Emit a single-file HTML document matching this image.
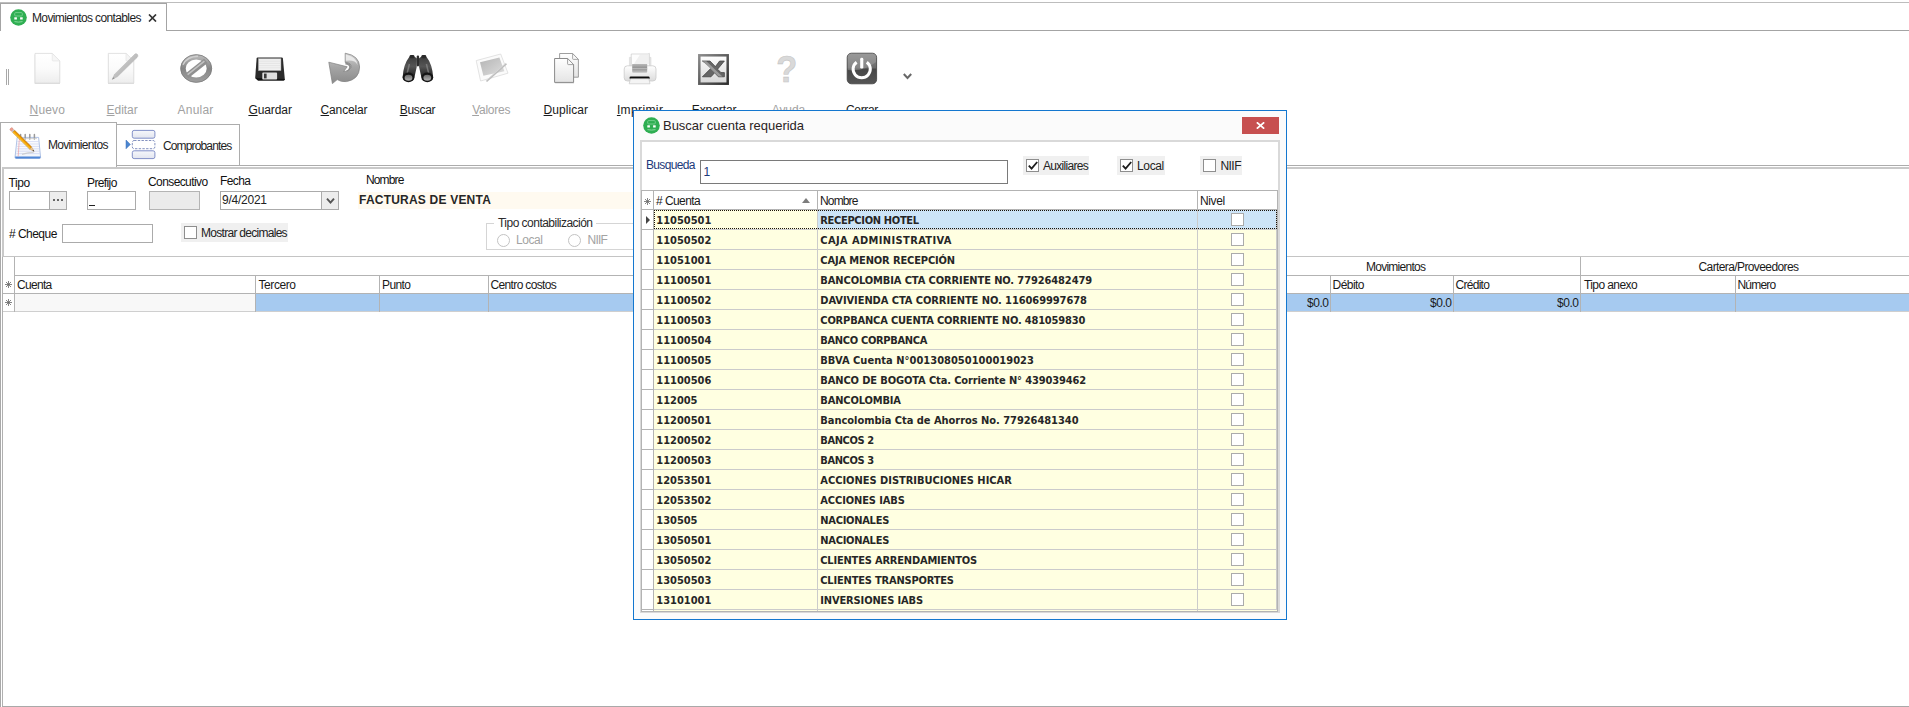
<!DOCTYPE html>
<html lang="es">
<head>
<meta charset="utf-8">
<title>Movimientos contables</title>
<style>
*{box-sizing:border-box;margin:0;padding:0}
html,body{width:1909px;height:707px;overflow:hidden;background:#fff}
body{position:relative;font-family:"Liberation Sans",sans-serif;font-size:12px;color:#000}
.abs{position:absolute}
.t{position:absolute;white-space:nowrap;line-height:14px}
#topline{left:0;top:2px;width:1909px;height:1px;background:#bdbdbd}
#leftline0{left:0;top:122px;width:1px;height:585px;background:#a9a9a9}
#leftline{left:2px;top:167px;width:2px;height:90px;background:#c9c9c9}
#leftline2{left:2px;top:256px;width:1px;height:451px;background:#b0b0b0}
#botline{left:2px;top:706px;width:1907px;height:1px;background:#a9a9a9}
#doctab{left:0;top:3px;width:167px;height:28px;border:1px solid #a4a4a4;border-bottom:none;background:#fff}
#docline{left:166px;top:30px;width:1743px;height:1px;background:#a4a4a4}
.tb{position:absolute;top:95px;width:90px;text-align:center;font-size:12px;line-height:30px;height:30px;white-space:nowrap;color:#1a1a1a}
.tb.dis{color:#a2a2a2}
.tb u{text-decoration:underline;text-underline-offset:0.5px;text-decoration-thickness:1px}
.ico{position:absolute;top:53px;width:32px;height:32px}
.itab{position:absolute;border:1px solid #acacac;border-bottom:none;background:#fff}
.inp{position:absolute;border:1px solid #ababab;background:#fff;height:19px}
.lbl{position:absolute;white-space:nowrap;font-size:12px;line-height:14px;color:#111}
.cbwrap{position:absolute;background:#f0f0f0}
.cb{display:inline-block;width:13px;height:13px;border:1px solid #8e8e8e;background:#fff;position:absolute}
.gl{position:absolute;background:#b3b3b3}
.gh{position:absolute;white-space:nowrap;font-size:12px;line-height:18px;height:18px;color:#1a1a1a}
#dlg{left:633px;top:110px;width:654px;height:510px;border:1px solid #1477cf;background:#fbfbfb}
#dlgpanel{left:6px;top:29px;width:640px;height:473px;border:2px solid #d9d9d9;background:#fff}
.drow{position:absolute;left:8px;width:636px;height:20px;font-family:"DejaVu Sans Condensed","DejaVu Sans","Liberation Sans",sans-serif;font-weight:bold;font-size:11px;line-height:22px;color:#262626}
.drow>div{position:absolute;top:0;height:20px;border-right:1px solid #cbcbcb;border-bottom:1px solid #cbcbcb;background:#ffffe1;white-space:nowrap;overflow:hidden}
.drow .c0{left:0;width:12px;background:#fff;border-color:#b3b3b3}
.drow .c1{left:12px;width:164px;padding-left:2.3px}
.drow .c2{left:176px;width:380px;padding-left:2.3px}
.drow .c3{left:556px;width:79px}
.drow .c3 .cb{left:33px;top:3px;border-color:#ababab}
.drow.sel .c1{background:#ffffe1}
.drow.sel .c2,.drow.sel .c3{background:#cde4f7}
.arr{position:absolute;left:4px;top:6px;width:0;height:0;border-left:4px solid #444;border-top:4px solid transparent;border-bottom:4px solid transparent}

</style>
</head>
<body>
<div class="abs" id="topline"></div>
<div class="abs" id="leftline0"></div>
<div class="abs" id="leftline"></div>
<div class="abs" id="leftline2"></div>
<div class="abs" id="botline"></div>
<div class="abs" id="docline"></div>
<div class="abs" id="doctab"></div>
<svg class="abs" style="left:10px;top:9px" width="17" height="17" viewBox="0 0 17 17"><circle cx="8.5" cy="8.5" r="8.3" fill="#2fae52"/><rect x="4.7" y="3.6" width="7.6" height="3.4" rx="1" fill="none" stroke="#7fd596" stroke-width="0.8"/><rect x="4.3" y="8.3" width="2.6" height="2.2" fill="#fff"/><rect x="10.1" y="8.3" width="2.6" height="2.2" fill="#fff"/><path d="M4.5 12.6 Q8.5 13.6 12.5 12.6" fill="none" stroke="#8fdca3" stroke-width="0.9"/></svg>
<span class="t" style="letter-spacing:-0.632px;left:32px;top:11px;font-size:12px;color:#1e1e1e">Movimientos contables</span>
<svg class="abs" style="left:148px;top:14px" width="9" height="8" viewBox="0 0 9 8"><path d="M1 0.5 L8 7.5 M8 0.5 L1 7.5" stroke="#333" stroke-width="1.7" fill="none"/></svg>

<!-- toolbar -->
<div class="abs" style="left:6px;top:69px;width:1px;height:16px;background:#a8a8a8"></div>
<div class="abs" style="left:8px;top:69px;width:1px;height:16px;background:#a8a8a8"></div>
<svg class="abs" style="left:0;top:48px" width="930" height="44" viewBox="0 48 930 44">
<defs>
<linearGradient id="gpage" x1="0" y1="0" x2="0" y2="1"><stop offset="0" stop-color="#ffffff"/><stop offset="0.5" stop-color="#fbfbfb"/><stop offset="1" stop-color="#ededed"/></linearGradient>
<linearGradient id="gpage2" x1="0" y1="0" x2="0" y2="1"><stop offset="0" stop-color="#ffffff"/><stop offset="1" stop-color="#e4e4e4"/></linearGradient>
<linearGradient id="gring" x1="0" y1="0" x2="0" y2="1"><stop offset="0" stop-color="#b4b4b4"/><stop offset="0.5" stop-color="#868686"/><stop offset="1" stop-color="#9c9c9c"/></linearGradient>
<linearGradient id="garrow" x1="0" y1="0" x2="0" y2="1"><stop offset="0" stop-color="#d2d2d2"/><stop offset="0.45" stop-color="#a6a6a6"/><stop offset="1" stop-color="#8a8a8a"/></linearGradient>
<linearGradient id="gbino" x1="0" y1="0" x2="0" y2="1"><stop offset="0" stop-color="#3a3a3a"/><stop offset="0.5" stop-color="#555"/><stop offset="1" stop-color="#1c1c1c"/></linearGradient>
<linearGradient id="glens" x1="0" y1="0" x2="0" y2="1"><stop offset="0" stop-color="#6a6a6a"/><stop offset="1" stop-color="#b0b0b0"/></linearGradient>
<linearGradient id="gphoto" x1="0" y1="0" x2="1" y2="1"><stop offset="0" stop-color="#b4b4b4"/><stop offset="1" stop-color="#dedede"/></linearGradient>
<linearGradient id="gtray" x1="0" y1="0" x2="0" y2="1"><stop offset="0" stop-color="#b8b8b8"/><stop offset="0.5" stop-color="#8f8f8f"/><stop offset="1" stop-color="#c4c4c4"/></linearGradient>
<linearGradient id="gprn" x1="0" y1="0" x2="0" y2="1"><stop offset="0" stop-color="#ffffff"/><stop offset="1" stop-color="#dcdcdc"/></linearGradient>
<linearGradient id="gxl" x1="0" y1="0" x2="1" y2="1"><stop offset="0" stop-color="#8c8c8c"/><stop offset="0.5" stop-color="#5c5c5c"/><stop offset="1" stop-color="#2e2e2e"/></linearGradient>
<linearGradient id="gxlin" x1="0" y1="0" x2="0" y2="1"><stop offset="0" stop-color="#ffffff"/><stop offset="1" stop-color="#d6d6d6"/></linearGradient>
<linearGradient id="gpow" x1="0" y1="0" x2="0" y2="1"><stop offset="0" stop-color="#8e8e8e"/><stop offset="0.48" stop-color="#6a6a6a"/><stop offset="0.52" stop-color="#474747"/><stop offset="1" stop-color="#555"/></linearGradient>
<linearGradient id="gpen" x1="0" y1="0" x2="1" y2="1"><stop offset="0" stop-color="#e2e2e2"/><stop offset="1" stop-color="#9c9c9c"/></linearGradient>
<filter id="sh" x="-10%" y="-10%" width="120%" height="125%"><feGaussianBlur stdDeviation="0.5"/></filter>
</defs>
<!-- Nuevo -->
<path d="M34.6 53.6 H52.3 L60 61.2 V83.2 H34.6 Z" fill="#c4c4c4" opacity="0.55" filter="url(#sh)" transform="translate(0,0.9)"/>
<path d="M35 53.4 H52.2 L59.8 61 V83 H35 Z" fill="url(#gpage)" stroke="#dadada" stroke-width="0.8"/>
<path d="M52.2 53.4 V60.2 Q52.2 61 53 61 H59.8 Z" fill="#f6f6f6" stroke="#e2e2e2" stroke-width="0.6"/>
<!-- Editar -->
<path d="M108 53.6 H126 L134 61.2 V83.2 H108 Z" fill="#c4c4c4" opacity="0.55" filter="url(#sh)" transform="translate(0,0.9)"/>
<path d="M108.3 53.4 H126 L133.8 61 V83 H108.3 Z" fill="url(#gpage)" stroke="#dadada" stroke-width="0.8"/>
<path d="M126 53.4 V60.2 Q126 61 126.8 61 H133.8 Z" fill="#f4f4f4" stroke="#e2e2e2" stroke-width="0.6"/>
<path d="M135.2 53.8 Q137 53.2 137.8 55 Q138.2 56.4 137 57.6 L117.6 76.6 L112.2 79.4 L114.6 74.2 Z" fill="url(#gpen)" stroke="#b4b4b4" stroke-width="0.5"/>
<path d="M112.2 79.4 L113.2 77.2 L114.6 78.3 Z" fill="#8a8a8a"/>
<!-- Anular -->
<ellipse cx="196.2" cy="68.5" rx="13.1" ry="11.5" fill="none" stroke="url(#gring)" stroke-width="5.2"/>
<path d="M186.6 76.2 L205.8 60.8" stroke="#909090" stroke-width="5.4" fill="none"/>
<path d="M187.6 74.6 L204.4 61.2" stroke="#c2c2c2" stroke-width="1.5" fill="none"/>
<ellipse cx="196.2" cy="68.5" rx="15.5" ry="13.9" fill="none" stroke="#7c7c7c" stroke-width="0.8"/>
<path d="M183 64.8 Q187 56.4 198 56.2" stroke="#d0d0d0" stroke-width="1.4" fill="none"/>
<!-- Guardar -->
<path d="M257.6 57.6 H281.8 Q282.8 57.6 282.9 58.6 L284.8 79 Q284.9 80.4 283.6 80.4 H258 L255.2 78 L256.6 58.6 Q256.7 57.6 257.6 57.6 Z" fill="#2b2b2b"/>
<path d="M255.2 78 L258 80.4 H283.6 Q284.9 80.4 284.8 79 Z" fill="#111"/>
<rect x="258.6" y="58.8" width="22.3" height="11.6" fill="#f1f1f1" stroke="#cfcfcf" stroke-width="0.5"/>
<path d="M259 61.2H280.6M259 63.4H280.6M259 65.6H280.6M259 67.8H280.6" stroke="#dcdcdc" stroke-width="0.6"/>
<rect x="262.3" y="72.6" width="14.8" height="7" rx="0.8" fill="#dedede"/>
<rect x="264" y="73.6" width="2.6" height="4.8" fill="#3a3a3a"/>
<!-- Cancelar -->
<path d="M345.2 53.2 Q359.4 55.6 359.6 67 Q359.4 79.4 346.4 81.6 Q341 82.2 337.2 79.6 L332.4 83.6 L328.8 62.2 L347.2 66.8 L343.6 71.6 Q349.4 71.6 351.2 67.6 Q352 62.8 345.2 62.4 Z" fill="url(#garrow)" stroke="#7e7e7e" stroke-width="0.7"/>
<path d="M345.8 54.4 Q357.4 57 357.6 65 Q355 59.4 345.8 60.8 Z" fill="#ececec" opacity="0.9"/>
<path d="M345.4 62.6 Q351.6 63 351 67.6 Q349.8 71 345.2 71.4 Q349 69.6 349.200 67 Q349 64.400 345.400 64.400 Z" fill="#7c7c7c" opacity="0.85"/>
<!-- Buscar (binoculars) -->
<path d="M409.4 56.8 Q410.8 54.8 413.4 55.8 L416.9 58.4 L416.7 67 L414.4 77.4 H402.6 Q403.4 64.4 409.4 56.8 Z" fill="url(#gbino)"/>
<path d="M426.400 56.8 Q425 54.8 422.400 55.8 L418.900 58.4 L419.100 67 L421.400 77.4 H433.200 Q432.400 64.4 426.400 56.8 Z" fill="url(#gbino)"/>
<rect x="416.700" y="55.6" width="2.400" height="10.8" rx="1.100" fill="#2e2e2e"/>
<rect x="409.600" y="54.9" width="4.800" height="3.400" rx="1.400" fill="#2a2a2a"/><rect x="421.400" y="54.9" width="4.800" height="3.400" rx="1.400" fill="#2a2a2a"/>
<path d="M409.400 64 L407.200 73 M426.400 64 L428.600 73" stroke="#8a8a8a" stroke-width="1.500" opacity="0.7"/>
<ellipse cx="408.500" cy="77.4" rx="5.900" ry="4.900" fill="#141414"/>
<ellipse cx="427.300" cy="77.4" rx="5.900" ry="4.900" fill="#141414"/>
<ellipse cx="408.500" cy="77.700" rx="3.900" ry="3" fill="url(#glens)"/>
<ellipse cx="427.300" cy="77.700" rx="3.900" ry="3" fill="url(#glens)"/>
<!-- Valores -->
<path d="M476.2 60.6 L500.7 54 L508 73.2 L480.6 81 Z" fill="#fbfbfb" stroke="#dcdcdc" stroke-width="0.8"/>
<path d="M480 62.2 L499.4 57.4 L504.4 71.2 L483.4 75.7 Z" fill="url(#gphoto)"/>
<path d="M506.4 63.6 L486.4 81.4" stroke="#bdbdbd" stroke-width="1.9" fill="none"/>
<path d="M506 63 L486 80.8" stroke="#e0e0e0" stroke-width="0.7" fill="none"/>
<!-- Duplicar -->
<path d="M559.6 53.5 H572.6 L578.4 59.4 V77.2 H559.6 Z" fill="url(#gpage2)" stroke="#949494" stroke-width="0.9"/>
<path d="M572.6 53.5 V58.6 Q572.6 59.4 573.4 59.4 H578.4 Z" fill="#f8f8f8" stroke="#949494" stroke-width="0.8"/>
<path d="M554.8 59.2 H567.4 L573.6 65.4 V82.8 H554.8 Z" fill="#9a9a9a" opacity="0.4" filter="url(#sh)" transform="translate(0.4,0.7)"/>
<path d="M554.6 58.5 H567.6 L573.6 64.6 V82.4 H554.6 Z" fill="url(#gpage2)" stroke="#8a8a8a" stroke-width="1"/>
<path d="M567.6 58.5 V63.8 Q567.6 64.6 568.4 64.6 H573.6 Z" fill="#fafafa" stroke="#8a8a8a" stroke-width="0.8"/>
<!-- Imprimir -->
<path d="M631.2 54 H648 L649.4 53.4 V66.6 H631.2 Z" fill="#fdfdfd" stroke="#cdcdcd" stroke-width="0.7"/>
<path d="M640 54.4 H649 V64 H634 Z" fill="#e9e9e9" opacity="0.7"/>
<path d="M629.4 57.4 H631 V66 H629.4 Z M649.6 57.4 H651 V66 H649.6Z" fill="#e8e8e8" stroke="#d0d0d0" stroke-width="0.5"/>
<rect x="624.2" y="65.8" width="31.8" height="15.2" rx="3.2" fill="url(#gprn)" stroke="#cacaca" stroke-width="0.8"/>
<path d="M632.2 64 H647.2 V71.8 Q647.2 72.8 646.2 72.8 H633.2 Q632.2 72.8 632.2 71.8 Z" fill="url(#gtray)"/>
<path d="M632.2 68.6 H647.2" stroke="#dadada" stroke-width="0.6"/>
<rect x="629.6" y="76.4" width="20" height="2.8" rx="1.2" fill="#0c0c0c"/>
<path d="M630.4 78.8 H648.8 L650 83.8 H629.2 Z" fill="#f4f4f4" stroke="#c8c8c8" stroke-width="0.7"/>
<!-- Exportar -->
<rect x="699.3" y="55.3" width="28.400" height="28.400" fill="url(#gxlin)" stroke="url(#gxl)" stroke-width="2.500"/>
<path d="M702.4 61 H710 L715.4 66.6 L719.6 61 H724.4 L717.6 69.2 L721 72.6 H724.4 V76.8 H718.4 L714.6 72.8 L711 76.8 H702.4 L711.6 67.6 Z" fill="#666" stroke="#3c3c3c" stroke-width="0.7"/>
<path d="M702.8 61.3 H706.4 L722.4 76.6 H718.6 Z" fill="#9a9a9a"/>
<!-- Ayuda -->
<text x="776.2" y="81.6" font-family="Liberation Sans, sans-serif" font-weight="bold" font-size="37" fill="#d9d9d9" stroke="#c6c6c6" stroke-width="0.6" textLength="21" lengthAdjust="spacingAndGlyphs">?</text>
<!-- Cerrar -->
<rect x="847.2" y="53.2" width="29.4" height="30.6" rx="4.2" fill="url(#gpow)" stroke="#3e3e3e" stroke-width="0.8"/>
<path d="M847.8 57 Q847.8 53.8 851 53.8 H872.8 Q876 53.8 876 57 V62 Q864 72 847.8 70 Z" fill="#a8a8a8" opacity="0.45"/>
<path d="M856.6 62.2 A8.6 8.6 0 1 0 866.8 62.2" fill="none" stroke="#fff" stroke-width="3"/>
<rect x="860.2" y="57.8" width="3.1" height="10.8" rx="1.4" fill="#fff"/>
</svg>

<div class="tb dis" style="left:2.3px"><span style="letter-spacing:0.139px"><u>N</u>uevo</span></div>
<div class="tb dis" style="left:77.1px"><span style="letter-spacing:-0.06px"><u>E</u>ditar</span></div>
<div class="tb dis" style="left:150.6px"><span style="letter-spacing:0.219px">Anular</span></div>
<div class="tb" style="left:225.1px"><span style="letter-spacing:-0.09px"><u>G</u>uardar</span></div>
<div class="tb" style="left:299px"><span style="letter-spacing:-0.141px"><u>C</u>ancelar</span></div>
<div class="tb" style="left:372.5px"><span style="letter-spacing:-0.31px"><u>B</u>uscar</span></div>
<div class="tb dis" style="left:446.2px"><span style="letter-spacing:-0.245px"><u>V</u>alores</span></div>
<div class="tb" style="left:520.9px"><span style="letter-spacing:0.071px"><u>D</u>uplicar</span></div>
<div class="tb" style="left:595.1px"><span style="letter-spacing:0.382px"><u>I</u>mprimir</span></div>
<div class="tb" style="left:669.1px"><span style="letter-spacing:-0.095px">Exportar</span></div>
<div class="tb dis" style="left:743.4px"><span style="letter-spacing:-0.122px">Ayuda</span></div>
<div class="tb" style="left:817px"><span style="letter-spacing:-0.319px">Cerrar</span></div>
<svg class="abs" style="left:903px;top:73px" width="9" height="7" viewBox="0 0 9 7"><path d="M0.800 1 L4.500 5 L8.200 1" stroke="#686868" stroke-width="2" fill="none"/></svg>

<!-- inner tabs -->
<div class="abs" style="left:116px;top:165px;width:1793px;height:1px;background:#acacac"></div>
<div class="itab" style="left:116px;top:124px;width:124px;height:41px"></div>
<div class="itab" style="left:0;top:122px;width:117px;height:45px"></div>
<svg class="abs" style="left:4px;top:124px" width="160" height="40" viewBox="4 124 160 40">
<defs>
<linearGradient id="gpad" x1="0" y1="0" x2="0" y2="1"><stop offset="0" stop-color="#ffffff"/><stop offset="1" stop-color="#f1f4fb"/></linearGradient>
<linearGradient id="gpencil" x1="0" y1="0" x2="1" y2="0"><stop offset="0" stop-color="#ffd34d"/><stop offset="0.5" stop-color="#f7a600"/><stop offset="1" stop-color="#d98200"/></linearGradient>
<linearGradient id="gbox" x1="0" y1="0" x2="0" y2="1"><stop offset="0" stop-color="#f6f7fb"/><stop offset="1" stop-color="#e2e5ef"/></linearGradient>
</defs>
<!-- notepad -->
<path d="M17.2 137.4 H38.6 L40.6 157.4 Q40.6 158.4 39.6 158.4 H16 Q15 158.4 15 157.4 Z" fill="url(#gpad)" stroke="#9db4de" stroke-width="0.8"/>
<path d="M15.2 156.6 H40.4 V157.6 Q40.4 158.6 39.4 158.6 H16.2 Q15.2 158.6 15.2 157.6 Z" fill="#4f86d6"/>
<path d="M17.4 141.6H38.8M17.2 144H39M17 146.400H39.200M16.800 148.800H39.400M16.600 151.200H39.600M16.400 153.600H39.800" stroke="#ccd3f2" stroke-width="0.7"/>
<path d="M19.4 138 L18.200 156.400" stroke="#f0a0a0" stroke-width="0.7"/>
<path d="M20.600 134.600V139M25.200 134.600V139M29.800 134.600V139M34.400 134.600V139" stroke="#9a9a9a" stroke-width="1.5" stroke-linecap="round"/>
<path d="M19 138.600H37" stroke="#c8c8c8" stroke-width="0.8"/>
<!-- pencil -->
<path d="M22 154.400 Q28 152.600 33.600 152.400" stroke="#c8c8c8" stroke-width="1.2" fill="none" opacity="0.8"/>
<g transform="translate(10.6,128.400) rotate(-45.600)">
<rect x="-1.500" y="0" width="3" height="3" rx="1" fill="#f0a090" stroke="#c07060" stroke-width="0.4"/>
<rect x="-1.500" y="2.800" width="3" height="1.500" fill="#c8c8c8"/>
<rect x="-1.500" y="4.200" width="3" height="24" fill="url(#gpencil)" stroke="#b06a00" stroke-width="0.4"/>
<path d="M-1.500 28.200 L0 33 L1.500 28.200 Z" fill="#ecc892" stroke="#b08040" stroke-width="0.3"/>
<path d="M-0.700 31.300 L0 33 L0.700 31.300 Z" fill="#333"/>
</g>
<!-- comprobantes -->
<path d="M126 140 L130.400 144.400 L126 148.800 Z" fill="#4b86d0" stroke="#3c6fb8" stroke-width="0.5"/>
<rect x="132.300" y="130.400" width="22.600" height="7.800" rx="1.800" fill="url(#gbox)" stroke="#7585c2" stroke-width="0.9"/>
<rect x="132.300" y="140.500" width="22.600" height="8.200" rx="1.800" fill="#fff" stroke="#7585b8" stroke-width="0.9" stroke-dasharray="2.400 1.300"/>
<rect x="132.300" y="150.800" width="22.600" height="7.800" rx="1.800" fill="url(#gbox)" stroke="#7585c2" stroke-width="0.9"/>
</svg>

<span class="t" style="letter-spacing:-0.696px;left:48px;top:138px;font-size:12px;color:#1e1e1e">Movimientos</span>
<span class="t" style="letter-spacing:-0.86px;left:163px;top:139px;font-size:12px;color:#1e1e1e">Comprobantes</span>

<!-- panel -->
<div class="abs" style="left:2px;top:167px;width:1907px;height:2px;background:#c9c9c9"></div>

<span class="lbl" style="letter-spacing:-0.402px;left:8.5px;top:176px">Tipo</span>
<span class="lbl" style="letter-spacing:-0.617px;left:87px;top:176px">Prefijo</span>
<span class="lbl" style="letter-spacing:-0.595px;left:148px;top:175px">Consecutivo</span>
<span class="lbl" style="letter-spacing:-0.592px;left:220px;top:174px">Fecha</span>
<span class="lbl" style="letter-spacing:-0.865px;left:366px;top:173px">Nombre</span>

<div class="inp" style="left:9px;top:191px;width:58px"></div>
<div class="abs" style="left:49px;top:192px;width:17px;height:17px;background:#ededed;border-left:1px solid #ababab"></div>
<div class="abs" style="left:53px;top:199px;width:2px;height:2px;background:#666;box-shadow:4px 0 0 #666,8px 0 0 #666"></div>
<div class="inp" style="left:87px;top:191px;width:49px"></div>
<div class="abs" style="left:89px;top:205px;width:6px;height:1px;background:#222"></div>
<div class="inp" style="left:149px;top:191px;width:51px;background:#ebebeb;border-color:#b4b4b4"></div>
<div class="inp" style="left:220px;top:191px;width:119px"></div>
<div class="abs" style="left:321px;top:192px;width:17px;height:17px;background:#ededed;border-left:1px solid #ababab"></div>
<svg class="abs" style="left:326px;top:197px" width="9" height="8" viewBox="0 0 9 8"><path d="M1 1.6 L4.5 5.6 L8 1.6" stroke="#555" stroke-width="1.9" fill="none"/></svg>
<span class="t" style="letter-spacing:-0.24px;left:222px;top:193px;font-size:12px;color:#222">9/4/2021</span>
<div class="abs" style="left:358px;top:192px;width:290px;height:17px;background:#fffaf0"></div>
<span class="t" style="letter-spacing:0.209px;left:359px;top:193px;font-size:12px;font-weight:bold;color:#262626">FACTURAS DE VENTA</span>

<span class="lbl" style="letter-spacing:-0.531px;left:9px;top:227px"># Cheque</span>
<div class="inp" style="left:62px;top:224px;width:91px"></div>
<div class="cbwrap" style="left:181px;top:223px;width:107px;height:19px"></div>
<span class="cb" style="left:184px;top:226px"></span>
<span class="lbl" style="letter-spacing:-0.714px;left:201px;top:226px;color:#222">Mostrar decimales</span>

<!-- group box -->
<div class="abs" style="left:486px;top:223px;width:170px;height:27px;border:1px solid #d5d5d5"></div>
<div class="abs" style="left:494px;top:223px;width:102px;height:1px;background:#fff"></div>
<span class="lbl" style="letter-spacing:-0.523px;left:498px;top:216px;color:#2a2a2a">Tipo contabilización</span>
<span class="abs" style="left:497px;top:234px;width:13px;height:13px;border:1px solid #c3c3c3;border-radius:50%"></span>
<span class="lbl" style="letter-spacing:-0.417px;left:516px;top:233px;color:#a3a3a3">Local</span>
<span class="abs" style="left:568px;top:234px;width:13px;height:13px;border:1px solid #c3c3c3;border-radius:50%"></span>
<span class="lbl" style="letter-spacing:-0.743px;left:587.5px;top:233px;color:#a3a3a3">NIIF</span>

<!-- main grid -->
<div class="abs" style="left:15px;top:294px;width:240px;height:17px;background:#f8f8f8"></div>
<div class="abs" style="left:255px;top:294px;width:1654px;height:17px;background:#a6caf0"></div>
<div class="gl" style="left:2px;top:256px;width:1907px;height:1px;background:#c4c4c4"></div>
<div class="gl" style="left:14px;top:275px;width:1895px;height:1px"></div>
<div class="gl" style="left:3px;top:293px;width:1906px;height:1px"></div>
<div class="gl" style="left:3px;top:311px;width:1906px;height:1px;background:#cfcfcf"></div>
<div class="gl" style="left:14px;top:257px;width:1px;height:55px"></div>
<div class="gl" style="left:255px;top:275px;width:1px;height:37px"></div>
<div class="gl" style="left:379px;top:275px;width:1px;height:37px"></div>
<div class="gl" style="left:488px;top:275px;width:1px;height:37px"></div>
<div class="gl" style="left:1330px;top:275px;width:1px;height:37px"></div>
<div class="gl" style="left:1453px;top:275px;width:1px;height:37px"></div>
<div class="gl" style="left:1580px;top:257px;width:1px;height:55px"></div>
<div class="gl" style="left:1735px;top:275px;width:1px;height:37px"></div>
<svg class="abs star" style="left:5px;top:281px" width="7" height="7" viewBox="0 0 7 7"><path d="M3.5 0V7M0 3.5H7M1 1L6 6M6 1L1 6" stroke="#666" stroke-width="0.8"/></svg>
<svg class="abs star" style="left:5px;top:299px" width="7" height="7" viewBox="0 0 7 7"><path d="M3.5 0V7M0 3.5H7M1 1L6 6M6 1L1 6" stroke="#666" stroke-width="0.8"/></svg>
<span class="gh" style="letter-spacing:-0.701px;left:17px;top:276px">Cuenta</span>
<span class="gh" style="letter-spacing:-0.431px;left:258.5px;top:276px">Tercero</span>
<span class="gh" style="letter-spacing:-0.612px;left:382px;top:276px">Punto</span>
<span class="gh" style="letter-spacing:-0.642px;left:490.5px;top:276px">Centro costos</span>
<span class="gh" style="letter-spacing:-0.742px;left:1366px;top:258px">Movimientos</span>
<span class="gh" style="letter-spacing:-0.605px;left:1698.5px;top:258px">Cartera/Proveedores</span>
<span class="gh" style="letter-spacing:-0.531px;left:1332.5px;top:276px">Débito</span>
<span class="gh" style="letter-spacing:-0.712px;left:1455.5px;top:276px">Crédito</span>
<span class="gh" style="letter-spacing:-0.594px;left:1584px;top:276px">Tipo anexo</span>
<span class="gh" style="letter-spacing:-0.815px;left:1737.5px;top:276px">Número</span>
<span class="gh" style="letter-spacing:-0.44px;left:1307px;top:294px">$0.0</span>
<span class="gh" style="letter-spacing:-0.44px;left:1430px;top:294px">$0.0</span>
<span class="gh" style="letter-spacing:-0.44px;left:1557px;top:294px">$0.0</span>

<div class="abs" id="dlg">
  <svg class="abs" style="left:9px;top:6px" width="17" height="17" viewBox="0 0 17 17"><circle cx="8.5" cy="8.5" r="8.3" fill="#2fae52"/><rect x="4.7" y="3.6" width="7.6" height="3.4" rx="1" fill="none" stroke="#7fd596" stroke-width="0.8"/><rect x="4.3" y="8.3" width="2.6" height="2.2" fill="#fff"/><rect x="10.1" y="8.3" width="2.6" height="2.2" fill="#fff"/><path d="M4.5 12.6 Q8.5 13.6 12.5 12.6" fill="none" stroke="#8fdca3" stroke-width="0.9"/></svg>
  <span class="t" style="letter-spacing:-0.029px;left:29px;top:7px;font-size:13px;line-height:16px;color:#2b2424">Buscar cuenta requerida</span>
  <div class="abs" style="left:608px;top:6px;width:37px;height:17px;background:#c75050"></div>
  <svg class="abs" style="left:622px;top:11px" width="9" height="7" viewBox="0 0 9 7"><path d="M0.8 0.3 L8.2 6.7 M8.2 0.3 L0.8 6.7" stroke="#fff" stroke-width="1.7" fill="none"/></svg>
  <div class="abs" id="dlgpanel"></div>
  <span class="lbl" style="letter-spacing:-0.656px;left:12px;top:47px;color:#1c3a7a">Busqueda</span>
  <div class="inp" style="left:66px;top:49px;width:308px;height:24px;border-color:#7a7a7a"></div>
  <span class="t" style="left:69.5px;top:54px;font-size:12px;color:#1c3a7a">1</span>
  <div class="cbwrap" style="left:389px;top:45px;width:66px;height:19px"></div>
  <span class="cb" style="left:392px;top:48px"></span>
  <svg class="abs" style="left:394px;top:50px" width="10" height="9" viewBox="0 0 10 9"><path d="M0.8 4.6 L3.6 7.6 L9.2 1" stroke="#1c1c1c" stroke-width="1.8" fill="none"/></svg>
  <span class="lbl" style="letter-spacing:-0.703px;left:409px;top:48px;color:#222">Auxiliares</span>
  <div class="cbwrap" style="left:483px;top:45px;width:48px;height:19px"></div>
  <span class="cb" style="left:486px;top:48px"></span>
  <svg class="abs" style="left:488px;top:50px" width="10" height="9" viewBox="0 0 10 9"><path d="M0.8 4.6 L3.6 7.6 L9.2 1" stroke="#1c1c1c" stroke-width="1.8" fill="none"/></svg>
  <span class="lbl" style="letter-spacing:-0.358px;left:503px;top:48px;color:#222">Local</span>
  <div class="cbwrap" style="left:566px;top:45px;width:42px;height:19px"></div>
  <span class="cb" style="left:569px;top:48px"></span>
  <span class="lbl" style="letter-spacing:-0.568px;left:586.5px;top:48px;color:#222">NIIF</span>
  <!-- grid header -->
  <div class="gl" style="left:7px;top:79px;width:637px;height:1px"></div>
  <div class="gl" style="left:7px;top:79px;width:1px;height:421px"></div>
  <div class="gl" style="left:19px;top:79px;width:1px;height:20px"></div>
  <div class="gl" style="left:183px;top:79px;width:1px;height:20px"></div>
  <div class="gl" style="left:563px;top:79px;width:1px;height:20px"></div>
  <div class="gl" style="left:643px;top:79px;width:1px;height:421px"></div>
  <svg class="abs star" style="left:10px;top:87px" width="7" height="7" viewBox="0 0 7 7"><path d="M3.5 0V7M0 3.5H7M1 1L6 6M6 1L1 6" stroke="#666" stroke-width="0.8"/></svg>
  <span class="gh" style="letter-spacing:-0.563px;left:22px;top:81px"># Cuenta</span>
  <span class="gh" style="letter-spacing:-0.848px;left:186px;top:81px">Nombre</span>
  <span class="gh" style="letter-spacing:-0.374px;left:566px;top:81px">Nivel</span>
  <span class="abs" style="left:168px;top:87px;width:0;height:0;border-bottom:5px solid #7d7d7d;border-left:4.5px solid transparent;border-right:4.5px solid transparent"></span>
<div class="drow sel" style="top:99px"><div class="c0"><span class="arr"></span></div><div class="c1"><span style="letter-spacing:-0.012px">11050501</span></div><div class="c2"><span style="letter-spacing:-0.317px">RECEPCION HOTEL</span></div><div class="c3"><span class="cb"></span></div></div>
<div class="drow" style="top:119px"><div class="c0"></div><div class="c1"><span style="letter-spacing:-0.012px">11050502</span></div><div class="c2"><span style="letter-spacing:0.379px">CAJA ADMINISTRATIVA</span></div><div class="c3"><span class="cb"></span></div></div>
<div class="drow" style="top:139px"><div class="c0"></div><div class="c1"><span style="letter-spacing:-0.012px">11051001</span></div><div class="c2"><span style="letter-spacing:-0.134px">CAJA MENOR RECEPCIÓN</span></div><div class="c3"><span class="cb"></span></div></div>
<div class="drow" style="top:159px"><div class="c0"></div><div class="c1"><span style="letter-spacing:-0.012px">11100501</span></div><div class="c2"><span style="letter-spacing:-0.103px">BANCOLOMBIA CTA CORRIENTE NO. 77926482479</span></div><div class="c3"><span class="cb"></span></div></div>
<div class="drow" style="top:179px"><div class="c0"></div><div class="c1"><span style="letter-spacing:-0.012px">11100502</span></div><div class="c2"><span style="letter-spacing:-0.066px">DAVIVIENDA CTA CORRIENTE NO. 116069997678</span></div><div class="c3"><span class="cb"></span></div></div>
<div class="drow" style="top:199px"><div class="c0"></div><div class="c1"><span style="letter-spacing:-0.012px">11100503</span></div><div class="c2"><span style="letter-spacing:-0.179px">CORPBANCA CUENTA CORRIENTE NO. 481059830</span></div><div class="c3"><span class="cb"></span></div></div>
<div class="drow" style="top:219px"><div class="c0"></div><div class="c1"><span style="letter-spacing:-0.012px">11100504</span></div><div class="c2"><span style="letter-spacing:-0.323px">BANCO CORPBANCA</span></div><div class="c3"><span class="cb"></span></div></div>
<div class="drow" style="top:239px"><div class="c0"></div><div class="c1"><span style="letter-spacing:-0.012px">11100505</span></div><div class="c2"><span style="letter-spacing:0.027px">BBVA Cuenta N°001308050100019023</span></div><div class="c3"><span class="cb"></span></div></div>
<div class="drow" style="top:259px"><div class="c0"></div><div class="c1"><span style="letter-spacing:-0.012px">11100506</span></div><div class="c2"><span style="letter-spacing:-0.118px">BANCO DE BOGOTA Cta. Corriente N° 439039462</span></div><div class="c3"><span class="cb"></span></div></div>
<div class="drow" style="top:279px"><div class="c0"></div><div class="c1"><span style="letter-spacing:-0.021px">112005</span></div><div class="c2"><span style="letter-spacing:-0.156px">BANCOLOMBIA</span></div><div class="c3"><span class="cb"></span></div></div>
<div class="drow" style="top:299px"><div class="c0"></div><div class="c1"><span style="letter-spacing:-0.012px">11200501</span></div><div class="c2"><span style="letter-spacing:-0.038px">Bancolombia Cta de Ahorros No. 77926481340</span></div><div class="c3"><span class="cb"></span></div></div>
<div class="drow" style="top:319px"><div class="c0"></div><div class="c1"><span style="letter-spacing:-0.012px">11200502</span></div><div class="c2"><span style="letter-spacing:-0.391px">BANCOS 2</span></div><div class="c3"><span class="cb"></span></div></div>
<div class="drow" style="top:339px"><div class="c0"></div><div class="c1"><span style="letter-spacing:-0.012px">11200503</span></div><div class="c2"><span style="letter-spacing:-0.391px">BANCOS 3</span></div><div class="c3"><span class="cb"></span></div></div>
<div class="drow" style="top:359px"><div class="c0"></div><div class="c1"><span style="letter-spacing:-0.012px">12053501</span></div><div class="c2"><span style="letter-spacing:-0.018px">ACCIONES DISTRIBUCIONES HICAR</span></div><div class="c3"><span class="cb"></span></div></div>
<div class="drow" style="top:379px"><div class="c0"></div><div class="c1"><span style="letter-spacing:-0.012px">12053502</span></div><div class="c2"><span style="letter-spacing:-0.108px">ACCIONES IABS</span></div><div class="c3"><span class="cb"></span></div></div>
<div class="drow" style="top:399px"><div class="c0"></div><div class="c1"><span style="letter-spacing:-0.021px">130505</span></div><div class="c2"><span style="letter-spacing:-0.274px">NACIONALES</span></div><div class="c3"><span class="cb"></span></div></div>
<div class="drow" style="top:419px"><div class="c0"></div><div class="c1"><span style="letter-spacing:-0.012px">13050501</span></div><div class="c2"><span style="letter-spacing:-0.274px">NACIONALES</span></div><div class="c3"><span class="cb"></span></div></div>
<div class="drow" style="top:439px"><div class="c0"></div><div class="c1"><span style="letter-spacing:-0.012px">13050502</span></div><div class="c2"><span style="letter-spacing:-0.195px">CLIENTES ARRENDAMIENTOS</span></div><div class="c3"><span class="cb"></span></div></div>
<div class="drow" style="top:459px"><div class="c0"></div><div class="c1"><span style="letter-spacing:-0.012px">13050503</span></div><div class="c2"><span style="letter-spacing:-0.188px">CLIENTES TRANSPORTES</span></div><div class="c3"><span class="cb"></span></div></div>
<div class="drow" style="top:479px"><div class="c0"></div><div class="c1"><span style="letter-spacing:-0.012px">13101001</span></div><div class="c2"><span style="letter-spacing:-0.14px">INVERSIONES IABS</span></div><div class="c3"><span class="cb"></span></div></div>
  <div class="gl" style="left:8px;top:98px;width:636px;height:1px"></div>
  <div class="abs" style="left:20px;top:99px;width:623px;height:1px;background:repeating-linear-gradient(90deg,#1a1208 0 1px,transparent 1px 2px)"></div>
  <div class="abs" style="left:20px;top:117px;width:623px;height:1px;background:repeating-linear-gradient(90deg,#1a1208 0 1px,transparent 1px 2px)"></div>
  <div class="abs" style="left:20px;top:99px;width:1px;height:19px;background:repeating-linear-gradient(180deg,#1a1208 0 1px,transparent 1px 2px)"></div>
  <div class="abs" style="left:642px;top:99px;width:1px;height:19px;background:repeating-linear-gradient(180deg,#1a1208 0 1px,transparent 1px 2px)"></div>
  <div class="gl" style="left:7px;top:500px;width:637px;height:1px"></div>
  <div class="abs" style="left:20px;top:499px;width:623px;height:1px;background:#ffffe1"></div>
  <div class="gl" style="left:19px;top:499px;width:1px;height:1px"></div>
  <div class="gl" style="left:183px;top:499px;width:1px;height:1px;background:#cbcbcb"></div>
  <div class="gl" style="left:563px;top:499px;width:1px;height:1px;background:#cbcbcb"></div>
</div>

</body>
</html>
